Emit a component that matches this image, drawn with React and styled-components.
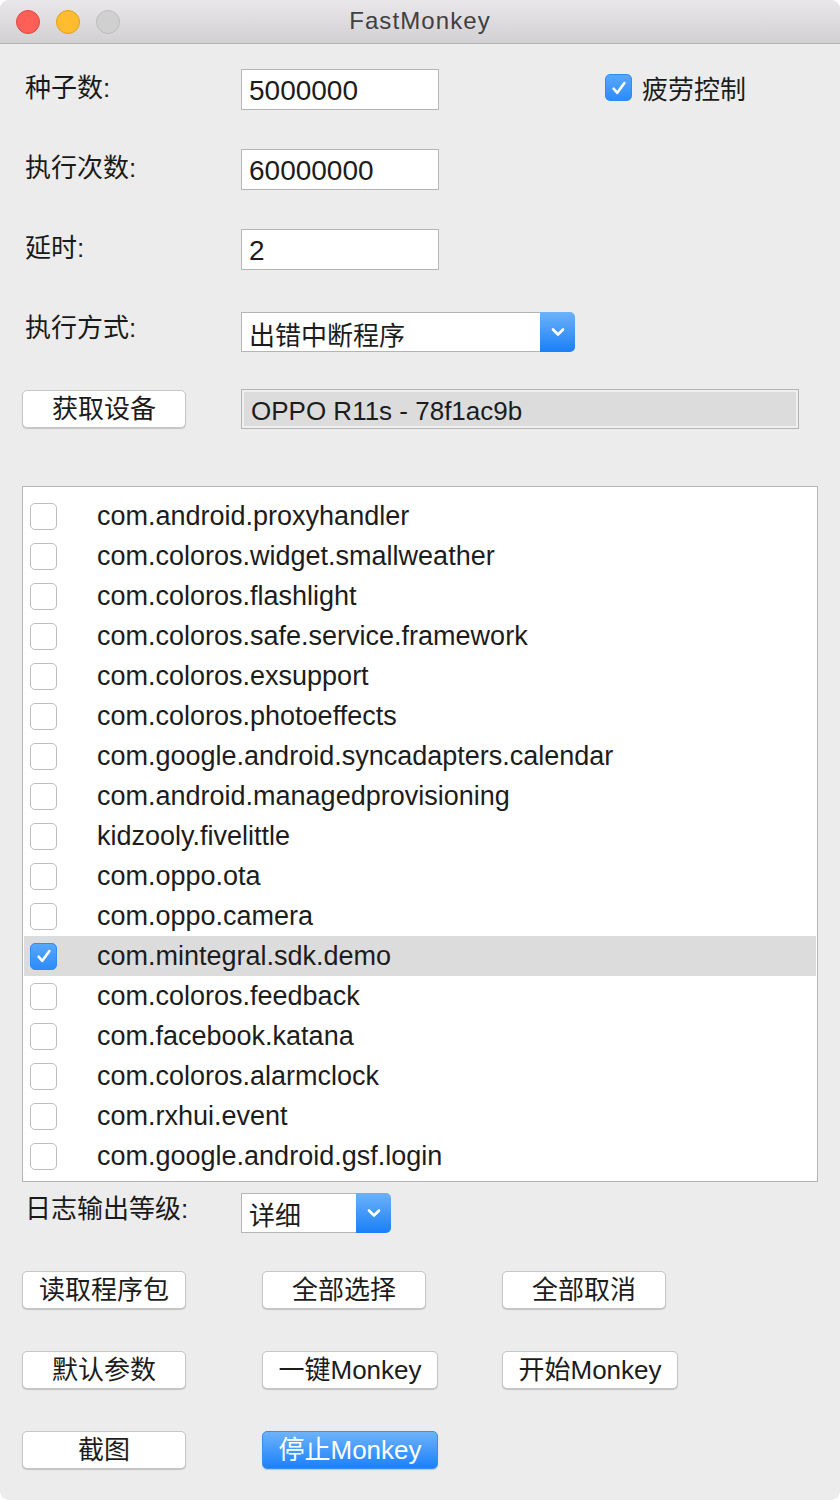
import styled, { createGlobalStyle } from 'styled-components';

const GlobalStyle = createGlobalStyle`
  html, body {
    margin: 0;
    padding: 0;
    background: #ffffff;
  }
  * {
    box-sizing: border-box;
  }
`

const Window = styled.div`
  width: 840px;
  height: 1500px;
  background: #ececec;
  border-radius: 9px;
  overflow: hidden;
  font-family: "Liberation Sans", "Noto Sans CJK SC", sans-serif;
  color: #1c1c1c;
`

const TitleBar = styled.header`
  position: relative;
  height: 44px;
  background: linear-gradient(#e9e7e9, #d2d0d2);
  border-bottom: 1px solid #b3b3b3;
  display: flex;
  align-items: center;
  justify-content: center;
`

const Lights = styled.div`
  position: absolute;
  left: 16px;
  top: 10px;
  display: flex;
  gap: 16px;
`

const Light = styled.span`
  width: 24px;
  height: 24px;
  border-radius: 50%;
  background: ${p => p.$color};
  border: 1px solid ${p => p.$edge};
`

const Title = styled.h1`
  margin: 0 0 1px;
  font-size: 24px;
  letter-spacing: 1.1px;
  font-weight: normal;
  color: #404040;
`

const Content = styled.main`
  padding: 0 22px;
  display: flex;
  flex-direction: column;
`

const Row = styled.div`
  display: flex;
  align-items: center;
  margin-top: ${p => p.$gap}px;
  height: ${p => p.$h}px;
`

const Label = styled.div`
  width: 219px;
  padding-left: 3px;
  padding-bottom: ${p => p.$lift || 3}px;
  font-size: 26px;
  line-height: 1;
  color: #1a1a1a;
  white-space: nowrap;
`

const TextInput = styled.div`
  width: 198px;
  height: 41px;
  background: #fff;
  border: 1px solid #b5b5b5;
  padding: 3px 0 0 7px;
  display: flex;
  align-items: center;
  font-size: 28px;
`

const CheckLabel = styled.label`
  display: flex;
  align-items: center;
  gap: 10px;
  margin-left: 166px;
  margin-bottom: 4px;
  font-size: 26px;
`

const Box = styled.span`
  width: 27px;
  height: 27px;
  border-radius: 5px;
  flex: none;
  display: flex;
  align-items: center;
  justify-content: center;
  background: ${p => (p.$on ? 'linear-gradient(#58a8fc, #2d8bfb)' : '#fff')};
  border: 1px solid ${p => (p.$on ? '#2f8cf5' : '#bdbdbd')};
`

const SelectBox = styled.div`
  display: flex;
  width: ${p => p.$w}px;
  height: 40px;
`

const SelectText = styled.div`
  flex: 1;
  background: #fff;
  border: 1px solid #b5b5b5;
  border-right: none;
  padding: 2px 0 0 7px;
  display: flex;
  align-items: center;
  font-size: 26px;
`

const SelectArrow = styled.div`
  width: 35px;
  border-radius: 0 5px 5px 0;
  background: linear-gradient(#6cb2fa, #1a7ff7);
  display: flex;
  align-items: center;
  justify-content: center;
`

const DeviceField = styled.div`
  width: 558px;
  height: 40px;
  margin-left: 55px;
  border: 1px solid #b5b5b5;
  background: #efefef;
  padding: 2px;
  display: flex;
`

const DeviceText = styled.div`
  flex: 1;
  background: #dcdcdc;
  padding: 5px 0 0 7px;
  display: flex;
  align-items: center;
  font-size: 26px;
`

const Button = styled.button`
  width: ${p => p.$w || 164}px;
  height: 38px;
  border-radius: 5px;
  font-family: inherit;
  font-size: 26px;
  line-height: 1;
  padding: 0 0 1px;
  border: 1px solid ${p => (p.$primary ? '#3d8ef0' : '#c6c6c6')};
  background: ${p => (p.$primary ? 'linear-gradient(#6db3fb, #1c80fb)' : '#fff')};
  color: ${p => (p.$primary ? '#fff' : '#1c1c1c')};
  box-shadow: 0 1px 1px rgba(0, 0, 0, 0.18);
`

const ButtonGrid = styled.div`
  display: grid;
  grid-template-columns: 240px 240px auto;
  justify-items: start;
  align-items: center;
  margin-top: ${p => p.$gap}px;
`

const PackageList = styled.ul`
  list-style: none;
  margin: 57px 0 0;
  padding: 9px 1px 0;
  height: 696px;
  width: 796px;
  background: #fff;
  border: 1px solid #b5b5b5;
  overflow: hidden;
`

const PackageRow = styled.li`
  height: 40px;
  display: flex;
  align-items: center;
  padding-left: 6px;
  gap: 40px;
  font-size: 27px;
  background: ${p => (p.$selected ? '#dcdcdc' : 'transparent')};
`

const Check = () => (
  <svg width="18" height="18" viewBox="0 0 16 16">
    <path d="M3.2 8.6 L6.5 12.3 L12.8 3.6" fill="none" stroke="#fff" strokeWidth="2.3" strokeLinecap="round" strokeLinejoin="round" />
  </svg>
)

const Chevron = () => (
  <svg width="16" height="12" viewBox="0 0 16 12">
    <path d="M3 3.5 L8 8.5 L13 3.5" fill="none" stroke="#fff" strokeWidth="2.6" strokeLinecap="round" strokeLinejoin="round" />
  </svg>
)

const packages = [
  'com.android.proxyhandler',
  'com.coloros.widget.smallweather',
  'com.coloros.flashlight',
  'com.coloros.safe.service.framework',
  'com.coloros.exsupport',
  'com.coloros.photoeffects',
  'com.google.android.syncadapters.calendar',
  'com.android.managedprovisioning',
  'kidzooly.fivelittle',
  'com.oppo.ota',
  'com.oppo.camera',
  'com.mintegral.sdk.demo',
  'com.coloros.feedback',
  'com.facebook.katana',
  'com.coloros.alarmclock',
  'com.rxhui.event',
  'com.google.android.gsf.login',
]

export default function App() {
  return (
    <Window>
      <GlobalStyle />
      <TitleBar>
        <Lights>
          <Light $color="#fe5f57" $edge="#e2463f" />
          <Light $color="#febc2e" $edge="#e1a116" />
          <Light $color="#d0d0d0" $edge="#bcbcbc" />
        </Lights>
        <Title>FastMonkey</Title>
      </TitleBar>

      <Content>
        <Row $gap={25} $h={41}>
          <Label>种子数:</Label>
          <TextInput>5000000</TextInput>
          <CheckLabel>
            <Box $on><Check /></Box>
            疲劳控制
          </CheckLabel>
        </Row>

        <Row $gap={39} $h={41}>
          <Label>执行次数:</Label>
          <TextInput>60000000</TextInput>
        </Row>

        <Row $gap={39} $h={41}>
          <Label>延时:</Label>
          <TextInput>2</TextInput>
        </Row>

        <Row $gap={42} $h={40}>
          <Label $lift={8}>执行方式:</Label>
          <SelectBox $w={334}>
            <SelectText>出错中断程序</SelectText>
            <SelectArrow><Chevron /></SelectArrow>
          </SelectBox>
        </Row>

        <Row $gap={37} $h={40}>
          <Button>获取设备</Button>
          <DeviceField>
            <DeviceText>OPPO R11s - 78f1ac9b</DeviceText>
          </DeviceField>
        </Row>

        <PackageList>
          {packages.map((name, i) => (
            <PackageRow key={name} $selected={i === 11}>
              <Box $on={i === 11}>{i === 11 && <Check />}</Box>
              {name}
            </PackageRow>
          ))}
        </PackageList>

        <Row $gap={11} $h={39}>
          <Label $lift={7}>日志输出等级:</Label>
          <SelectBox $w={150}>
            <SelectText>详细</SelectText>
            <SelectArrow><Chevron /></SelectArrow>
          </SelectBox>
        </Row>

        <ButtonGrid $gap={39}>
          <Button>读取程序包</Button>
          <Button>全部选择</Button>
          <Button>全部取消</Button>
        </ButtonGrid>

        <ButtonGrid $gap={42}>
          <Button>默认参数</Button>
          <Button $w={176}>一键Monkey</Button>
          <Button $w={176}>开始Monkey</Button>
        </ButtonGrid>

        <ButtonGrid $gap={42}>
          <Button>截图</Button>
          <Button $w={176} $primary>停止Monkey</Button>
        </ButtonGrid>
      </Content>
    </Window>
  )
}
